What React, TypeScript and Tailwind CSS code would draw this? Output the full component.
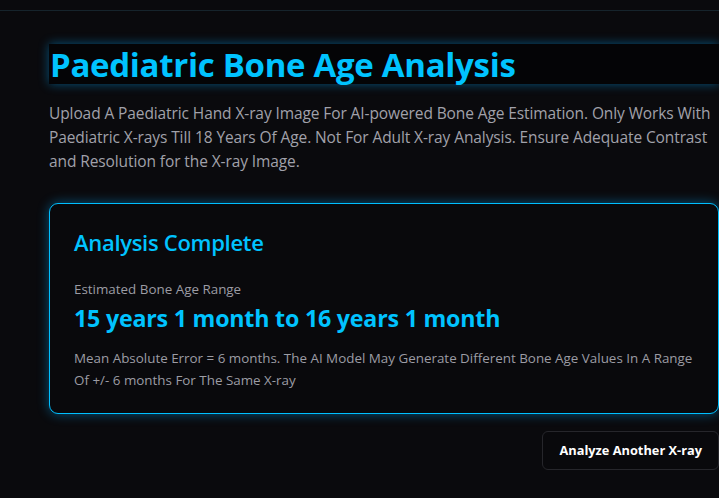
import React from "react";

export default function App() {
  return (
    <div
      className="min-h-[498px] w-full overflow-hidden bg-[#0a0a0d] text-[#a3a3ab]"
      style={{ fontFamily: '"Open Sans", "Noto Sans", sans-serif' }}
    >
      {/* top bar edge */}
      <div className="h-[11px] border-b border-[#16242c]" />

      <main className="w-[670px] ml-[49px] pt-[33px]">
        {/* Heading */}
        <div className="h-[40px] flex items-center bg-[#040406] shadow-[0_0_10px_rgba(0,170,255,0.45)]">
          <h1 className="text-[33px] font-bold leading-none text-[#00c3ff] tracking-[-0.3px] pl-[1px]">
            Paediatric Bone Age Analysis
          </h1>
        </div>

        <p className="mt-[17px] text-[15.5px] leading-[24px] text-[#a1a1aa] tracking-[-0.1px]">
          Upload A Paediatric Hand X-ray Image For AI-powered Bone Age Estimation. Only Works With
          Paediatric X-rays Till 18 Years Of Age. Not For Adult X-ray Analysis. Ensure Adequate Contrast
          and Resolution for the X-ray Image.
        </p>

        {/* Result card */}
        <section className="mt-[30px] rounded-[9px] border border-[#00bfff] bg-[#09090c] pl-[24px] pr-[18px] pt-[23px] pb-[22px] shadow-[0_0_12px_rgba(0,170,255,0.45)]">
          <h2 className="text-[22px] font-semibold leading-[30px] text-[#00c3ff] tracking-[-0.3px]">
            Analysis Complete
          </h2>
          <div className="mt-[22px] text-[13.4px] leading-[20px] text-[#9c9ca4]">
            Estimated Bone Age Range
          </div>
          <div className="mt-[3px] text-[23.2px] font-bold leading-[32px] text-[#00c3ff] tracking-[-0.2px]">
            15 years 1 month to 16 years 1 month
          </div>
          <p className="mt-[13px] text-[13.4px] leading-[22px] text-[#9c9ca4]">
            Mean Absolute Error = 6 months. The AI Model May Generate Different Bone Age Values In A Range
            Of +/- 6 months For The Same X-ray
          </p>
        </section>

        <div className="flex justify-end mt-[17px]">
          <button className="h-[39px] px-[16px] rounded-[6px] border border-[#26262b] bg-[#09090c] text-[12.8px] font-bold text-white">
            Analyze Another X-ray
          </button>
        </div>
      </main>
    </div>
  );
}
